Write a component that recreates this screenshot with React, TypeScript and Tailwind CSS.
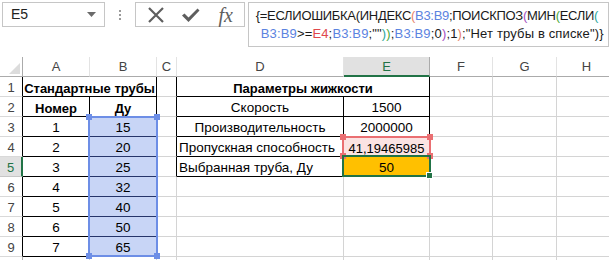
import React from "react";

const FONT = { fontFamily: '"Liberation Sans", Arial, sans-serif' };

type Seg = [string, string];
const C_BLACK = "#1a1a1a";
const C_BLUE = "#5b83e0";
const C_RED = "#e0474c";
const C_SALMON = "#e8836a";
const C_PURPLE = "#a350c0";
const C_GREEN = "#4aa83a";
const C_TEAL = "#2aa59a";

const line1: Seg[] = [
  ["{=ЕСЛИОШИБКА(ИНДЕКС", C_BLACK],
  ["(", C_SALMON],
  ["B3:B9", C_BLUE],
  [";ПОИСКПОЗ", C_BLACK],
  ["(", C_PURPLE],
  ["МИН", C_BLACK],
  ["(", C_GREEN],
  ["ЕСЛИ", C_BLACK],
  ["(", C_TEAL],
];
const line2: Seg[] = [
  ["B3:B9", C_BLUE],
  [">=", C_BLACK],
  ["E4", C_RED],
  [";", C_BLACK],
  ["B3:B9", C_BLUE],
  [';""', C_BLACK],
  [")", C_TEAL],
  [")", C_GREEN],
  [";", C_BLACK],
  ["B3:B9", C_BLUE],
  [";0", C_BLACK],
  [")", C_PURPLE],
  [";1", C_BLACK],
  [")", C_SALMON],
  [';"Нет трубы в списке")}', C_BLACK],
];

const cols = ["A", "B", "C", "D", "E", "F", "G", "H"];

type Cell = {
  text?: string;
  bold?: boolean;
  align?: "c" | "l";
  span?: number;
  small?: boolean;
};

const data: Record<number, Record<number, Cell>> = {
  1: {
    1: { text: "Стандартные трубы", bold: true, span: 2 },
    4: { text: "Параметры жижкости", bold: true, span: 2 },
  },
  2: {
    1: { text: "Номер", bold: true },
    2: { text: "Ду", bold: true },
    4: { text: "Скорость" },
    5: { text: "1500" },
  },
  3: { 1: { text: "1" }, 2: { text: "15" }, 4: { text: "Производительность" }, 5: { text: "2000000" } },
  4: {
    1: { text: "2" },
    2: { text: "20" },
    4: { text: "Пропускная способность", align: "l" },
    5: { text: "41,19465985", small: true },
  },
  5: { 1: { text: "3" }, 2: { text: "25" }, 4: { text: "Выбранная труба, Ду", align: "l" }, 5: { text: "50" } },
  6: { 1: { text: "4" }, 2: { text: "32" } },
  7: { 1: { text: "5" }, 2: { text: "40" } },
  8: { 1: { text: "6" }, 2: { text: "50" } },
  9: { 1: { text: "7" }, 2: { text: "65" } },
};

function blackV(r: number, c: number) {
  if (r >= 1 && r <= 9 && (c === 0 || c === 1 || c === 2)) {
    if (r === 1 && c === 1) return false;
    return true;
  }
  if (r >= 1 && r <= 5 && (c === 3 || c === 4 || c === 5)) {
    if (r === 1 && c === 4) return false;
    return true;
  }
  return false;
}
function blackH(r: number, c: number) {
  if ((c === 1 || c === 2) && r >= 1 && r <= 9) return true;
  if ((c === 4 || c === 5) && r >= 1 && r <= 5) return true;
  return false;
}

function Dots() {
  return (
    <div className="w-[30px] h-[25px] flex flex-col items-center justify-center gap-[2px]">
      <div className="w-[2px] h-[2px] bg-[#9a9a9a]" />
      <div className="w-[2px] h-[2px] bg-[#9a9a9a]" />
      <div className="w-[2px] h-[2px] bg-[#9a9a9a]" />
    </div>
  );
}

function Row({ r }: { r: number }) {
  const cells: React.ReactNode[] = [];
  const sel = r === 5;
  cells.push(
    <div
      key="h"
      className={
        "flex items-center justify-center pt-[3px] text-[13px] border-b border-r " +
        (sel
          ? "bg-[#e1e1e1] text-[#217346] border-b-[#c6c6c6] border-r-[#217346] border-r-2"
          : "bg-white text-[#444] border-b-[#d9d9d9] " + (blackV(r, 0) ? "border-r-black" : "border-r-[#ababab]"))
      }
    >
      {r <= 9 ? r : ""}
    </div>
  );
  const rowData = data[r] || {};
  let c = 1;
  while (c <= 8) {
    const cell = rowData[c];
    const span = cell?.span || 1;
    const lastC = c + span - 1;
    const rightBlack = blackV(r, lastC);
    const bottomBlack = blackH(r, c);
    let bg = "bg-white";
    if (c === 2 && r >= 3 && r <= 9) bg = "bg-[#c8d5f6]";
    if (c === 5 && r === 4) bg = "bg-[#fbe3e3]";
    if (c === 5 && r === 5) bg = "bg-[#ffc000]";
    const navy = c === 2 && r >= 3 && r <= 9;
    cells.push(
      <div
        key={c}
        className={
          "flex items-center pt-[4px] overflow-visible whitespace-nowrap text-black border-r border-b " +
          bg +
          " " +
          (span === 2 ? "col-span-2 " : "") +
          (cell?.align === "l" ? "justify-start pl-[2px] " : "justify-center ") +
          (cell?.bold ? "font-bold text-[13px] " : cell?.small ? "text-[13px] " : "text-[13.5px] ") +
          (navy ? "text-[#1f2d5a] " : "") +
          (rightBlack ? (navy ? "border-r-[#26356a] " : "border-r-black ") : "border-r-[#d4d4d4] ") +
          (bottomBlack ? (navy ? "border-b-[#26356a]" : "border-b-black") : "border-b-[#d4d4d4]")
        }
      >
        {cell?.text}
      </div>
    );
    c += span;
  }
  return <>{cells}</>;
}

export default function App() {
  return (
    <div className="w-[609px] h-[260px] overflow-hidden bg-white relative" style={FONT}>
      {/* formula bar */}
      <div className="h-[57px] flex items-start pt-[2px]">
        <div className="ml-[2px] w-[103px] h-[25px] border border-[#c6c6c6] flex items-center justify-between pl-[8px] pr-[8px] text-[14px] text-[#222]">
          <span>E5</span>
          <svg width="9" height="5" viewBox="0 0 9 5">
            <path d="M0 0 L9 0 L4.5 5 Z" fill="#6b6b6b" />
          </svg>
        </div>
        <Dots />
        <div className="w-[110px] h-[25px] border border-[#c6c6c6] flex items-center">
          <div className="w-[36px] flex justify-center pl-[4px]">
            <svg width="18" height="18" viewBox="0 0 18 18">
              <path d="M2 2 L16 16 M16 2 L2 16" stroke="#5e5e5e" strokeWidth="2.2" />
            </svg>
          </div>
          <div className="w-[36px] flex justify-center pl-[2px]">
            <svg width="19" height="16" viewBox="0 0 19 16">
              <path d="M1 8.5 L3.5 6.5 L7.5 10.5 L16.5 1.5 L18.5 3.5 L7.5 15 Z" fill="#5e5e5e" />
            </svg>
          </div>
          <div
            className="w-[36px] flex justify-center text-[20px] italic text-[#5e5e5e] leading-none"
            style={{ fontFamily: '"Liberation Serif", "Times New Roman", serif' }}
          >
            fx
          </div>
        </div>
        <div className="ml-[3px] w-[362px] h-[45px] border border-[#c6c6c6] overflow-hidden text-[13px] leading-[18px] pt-[4px] pl-[7px] whitespace-nowrap">
          <div className="tracking-[-0.3px]">
            {line1.map(([t, col], i) => (
              <span key={i} style={{ color: col }}>
                {t}
              </span>
            ))}
          </div>
          <div className="pl-[5px] tracking-[0.15px]">
            {line2.map(([t, col], i) => (
              <span key={i} style={{ color: col }}>
                {t}
              </span>
            ))}
          </div>
        </div>
      </div>

      {/* sheet */}
      <div className="relative">
        <div className="grid grid-cols-[23px_67px_67px_20px_167px_86px_63px_64px_60px] auto-rows-[20px]">
          <div className="bg-white border-r border-b border-r-[#ababab] border-b-[#ababab] relative">
            <svg className="absolute right-[2px] bottom-[2px]" width="11" height="11" viewBox="0 0 11 11">
              <path d="M11 0 L11 11 L0 11 Z" fill="#dcdcdc" />
            </svg>
          </div>
          {cols.map((l) =>
            l === "E" ? (
              <div
                key={l}
                className="flex items-center justify-center pt-[2px] text-[13px] text-[#217346] bg-[#e1e1e1] border-r border-r-[#ababab] border-b-2 border-b-[#217346]"
              >
                {l}
              </div>
            ) : (
              <div
                key={l}
                className="flex items-center justify-center pt-[1px] text-[13px] text-[#444] bg-white border-r border-r-[#e3e3e3] border-b border-b-[#ababab]"
              >
                {l}
              </div>
            )
          )}
          {[1, 2, 3, 4, 5, 6, 7, 8, 9, 10].map((r) => (
            <Row key={r} r={r} />
          ))}
        </div>

        {/* blue range B3:B9 */}
        <div className="absolute left-[88px] top-[59px] w-[70px] h-[141px] border-2 border-[#6d8ee6] pointer-events-none">
          <div className="absolute -left-[4px] -top-[4px] w-[6px] h-[6px] bg-[#6d8ee6]" />
          <div className="absolute -right-[4px] -top-[4px] w-[6px] h-[6px] bg-[#6d8ee6]" />
          <div className="absolute -left-[4px] -bottom-[4px] w-[6px] h-[6px] bg-[#6d8ee6]" />
          <div className="absolute -right-[4px] -bottom-[4px] w-[6px] h-[6px] bg-[#6d8ee6]" />
        </div>

        {/* red range E4 */}
        <div className="absolute left-[342px] top-[79px] w-[89px] h-[21px] border-2 border-[#ea6f72] pointer-events-none">
          <div className="absolute -left-[4px] -top-[4px] w-[6px] h-[6px] bg-[#ea6f72]" />
          <div className="absolute -right-[4px] -top-[4px] w-[6px] h-[6px] bg-[#ea6f72]" />
          <div className="absolute -left-[4px] -bottom-[4px] w-[6px] h-[6px] bg-[#ea6f72]" />
          <div className="absolute -right-[4px] -bottom-[4px] w-[6px] h-[6px] bg-[#ea6f72]" />
        </div>

        {/* selected E5 */}
        <div className="absolute left-[342px] top-[98px] w-[89px] h-[22px] border-2 border-[#217346] pointer-events-none">
          <div className="absolute -right-[4px] -bottom-[4px] w-[7px] h-[7px] bg-[#217346] border border-white" />
        </div>
      </div>
    </div>
  );
}
